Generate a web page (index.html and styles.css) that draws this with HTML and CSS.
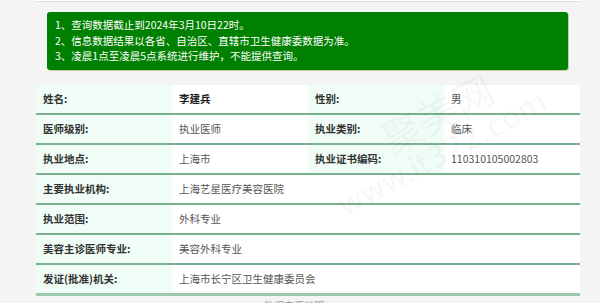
FILE: index.html
```html
<!DOCTYPE html>
<html lang="zh-CN">
<head>
<meta charset="utf-8">
<title>医师查询</title>
<link rel="stylesheet" href="styles.css">
</head>
<body>
<div class="wrap">
  <div class="topbar"></div>
  <div class="notice">
    <p>1、查询数据截止到2024年3月10日22时。</p>
    <p>2、信息数据结果以各省、自治区、直辖市卫生健康委数据为准。</p>
    <p>3、凌晨1点至凌晨5点系统进行维护，不能提供查询。</p>
  </div>
  <table class="info">
    <colgroup><col class="c"><col class="c"><col class="c"><col class="c"></colgroup>
    <tr><td class="lb">姓名:</td><td class="vl strong">李建兵</td><td class="lb">性别:</td><td class="vl">男</td></tr>
    <tr><td class="lb">医师级别:</td><td class="vl">执业医师</td><td class="lb">执业类别:</td><td class="vl">临床</td></tr>
    <tr><td class="lb">执业地点:</td><td class="vl">上海市</td><td class="lb">执业证书编码:</td><td class="vl">110310105002803</td></tr>
    <tr><td class="lb">主要执业机构:</td><td class="vl" colspan="3">上海艺星医疗美容医院</td></tr>
    <tr><td class="lb">执业范围:</td><td class="vl" colspan="3">外科专业</td></tr>
    <tr><td class="lb">美容主诊医师专业:</td><td class="vl" colspan="3">美容外科专业</td></tr>
    <tr><td class="lb">发证(批准)机关:</td><td class="vl" colspan="3">上海市长宁区卫生健康委员会</td></tr>
  </table>
  <div class="foot">数据来源说明</div>
</div>
<div class="wm wm1"><div class="wm-big">聚美网</div><div class="wm-small">www.it322.com</div></div>
</body>
</html>
```
FILE: styles.css
```css
html, body {
  margin: 0;
  padding: 0;
  background: #f4f4f4;
  font-family: "Noto Sans CJK SC", "Noto Sans", sans-serif;
  overflow: hidden;
  height: 303px;
}
.wrap {
  margin-left: 36px;
  width: 544px;
}
.topbar {
  height: 1px;
  background: #fff;
  border-bottom: 1px solid #dcdcdc;
}
.notice {
  margin: 10px 12px 15px 11px;
  background: #008000;
  border-radius: 3px;
  box-shadow: 1px 1px 0 #cfc9a6;
  color: #fff;
  font-size: 10.5px;
  line-height: 15.5px;
  padding: 5px 8px 6px;
}
.notice p {
  margin: 0;
}
.info {
  width: 544px;
  border-collapse: collapse;
  table-layout: fixed;
  font-size: 10.5px;
}
.info .c {
  width: 136px;
}
.info td {
  height: 28px;
  padding: 0 0 0 7px;
  line-height: 14px;
  border-bottom: 2px solid #79b08f;
  white-space: nowrap;
}
.info tr:last-child td {
  border-bottom: 3px solid #9cc8ad;
}
.lb {
  background: #f0fcf6;
  color: #333;
  font-weight: bold;
}
.vl {
  background: #fff;
  color: #555;
}
.vl.strong {
  color: #222;
  font-weight: bold;
}
.foot {
  margin-top: 2px;
  padding-left: 228px;
  font-size: 10px;
  color: #999;
}
.wm {
  position: absolute;
  left: 330px;
  top: 150px;
  color: rgba(0, 0, 0, 0.05);
  white-space: nowrap;
  transform: rotate(-28deg);
  transform-origin: left center;
  pointer-events: none;
}
.wm-big {
  font-family: "Noto Sans CJK SC", sans-serif;
  font-size: 40px;
  line-height: 44px;
  padding-left: 70px;
}
.wm-small {
  font-family: "DejaVu Sans", sans-serif;
  font-size: 30px;
  line-height: 34px;
}
```
